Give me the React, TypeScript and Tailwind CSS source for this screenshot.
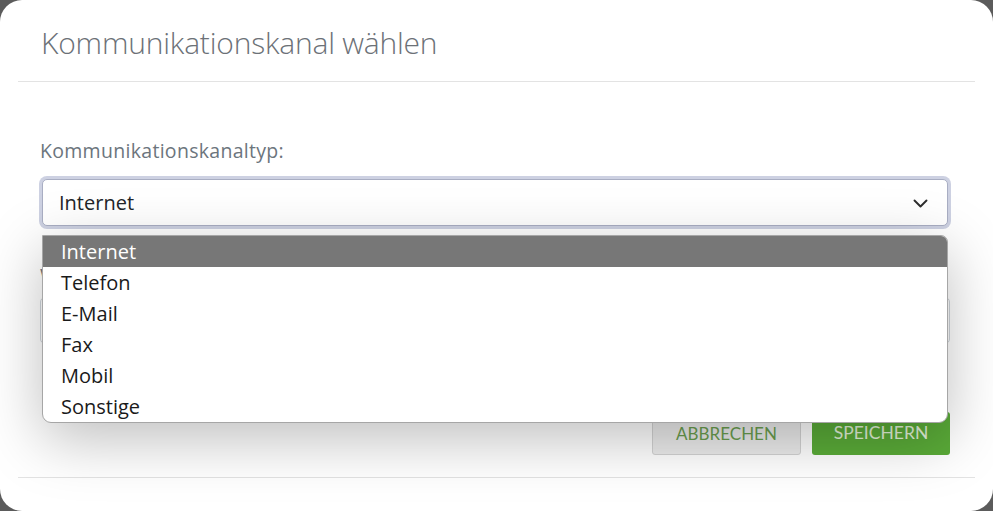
import React from 'react';

const channelTypes = ['Internet', 'Telefon', 'E-Mail', 'Fax', 'Mobil', 'Sonstige'];

const ChannelDialog: React.FC = () => {
	const selected = 'Internet';

	return (
		<div className="w-[993px] h-[511px] bg-[#5b5b5b] overflow-hidden">
			<div className="relative w-full h-full bg-white rounded-[22px] flex flex-col font-['Open_Sans',sans-serif]">
				{/* header */}
				<div className="mx-[18px] h-[82px] border-b border-[#e3e3e3] px-[23px] pt-[22px]">
					<h2 className="text-[30px] font-light text-[#6c7177] leading-[42px] tracking-[-0.2px]">
						Kommunikationskanal wählen
					</h2>
				</div>

				{/* body */}
				<div className="ml-[18px] mr-[18px] pl-[22px] pr-[25px] pt-[55px] flex flex-col">
					<label className="text-[19.5px] text-[#6c757d] leading-[28px] tracking-[0.3px]">
						Kommunikationskanaltyp:
					</label>
					<div className="mx-[2px] mt-[14px] h-[47px] rounded-[5px] border border-[#a9aec3] bg-white shadow-[0_0_0_3px_#cdd1e2] flex items-center justify-between pl-[16px] pr-[19px]">
						<span className="text-[20px] text-[#212529]">{selected}</span>
						<svg width="15" height="9" viewBox="0 0 15 9" fill="none" className="mt-[2px]">
							<polyline points="1.5,1.5 7.5,7.5 13.5,1.5" stroke="#2d2d2d" strokeWidth="1.9" strokeLinecap="round" strokeLinejoin="round" />
						</svg>
					</div>

					<label className="mt-[35px] text-[19px] text-[#6c757d] leading-[28px]">
						Wert:
					</label>
					<div className="mt-[8px] h-[47px] rounded-[5px] border border-[#ced4da] bg-white" />

					<div className="mt-[68px] flex justify-end gap-[11px] font-['Lato',sans-serif]">
						<button className="w-[149px] h-[43px] rounded-[3px] border border-[#d3d3d3] bg-[#ececec] text-[17px] text-[#6a9e4f]">
							ABBRECHEN
						</button>
						<button className="w-[138px] h-[43px] rounded-[3px] bg-[#5aab38] text-[17.5px] text-[#e3f2da]">
							SPEICHERN
						</button>
					</div>
				</div>

				{/* footer divider */}
				<div className="mx-[18px] mt-[22px] border-t border-[#e3e3e3]" />

				{/* open dropdown list */}
				<ul className="absolute left-[42px] top-[235px] w-[906px] bg-white border border-[#a6a6a6] rounded-b-[9px] rounded-tr-[7px] overflow-hidden shadow-[0_16px_60px_rgba(0,0,0,0.26)]">
					{channelTypes.map((type) => (
						<li
							key={type}
							className={`h-[31px] pl-[18px] flex items-center text-[20px] ${
								type === selected ? 'bg-[#777777] text-white' : 'text-[#1a1a1a]'
							}`}
						>
							{type}
						</li>
					))}
				</ul>
			</div>
		</div>
	);
};

export default ChannelDialog;
